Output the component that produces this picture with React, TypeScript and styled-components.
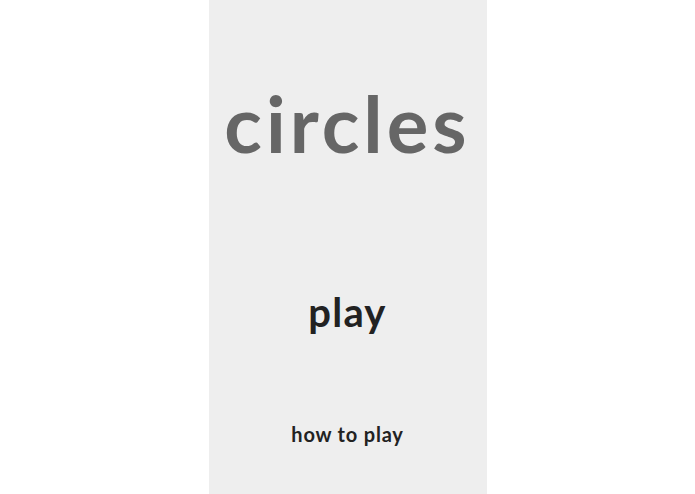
import React from "react";
import styled, { createGlobalStyle } from "styled-components";

const Global = createGlobalStyle`
  html, body { margin: 0; padding: 0; background: #ffffff; }
  body { font-family: Lato, "Noto Sans", sans-serif; }
`;

const Page = styled.div`
  display: flex;
  justify-content: center;
  height: 494px;
`;

const Panel = styled.main`
  width: 278px;
  height: 100%;
  background: #eeeeee;
  display: flex;
  flex-direction: column;
  align-items: center;
  padding-top: 84px;
  box-sizing: border-box;
`;

const Title = styled.h1`
  margin: 0;
  font-size: 78px;
  line-height: 78px;
  font-weight: 700;
  color: #666666;
  letter-spacing: 4px;
`;

const MenuItem = styled.button<{ $size: number; $mt: number; $ls: number }>`
  margin: ${(p) => p.$mt}px 0 0;
  padding: 0;
  border: 0;
  background: none;
  cursor: pointer;
  font-family: Lato, "Noto Sans", sans-serif;
  font-size: ${(p) => p.$size}px;
  line-height: ${(p) => p.$size}px;
  font-weight: 700;
  color: #222222;
  letter-spacing: ${(p) => p.$ls}px;
`;

export default function App() {
  return (
    <>
      <Global />
      <Page>
        <Panel>
          <Title>circles</Title>
          <MenuItem $size={40} $mt={130} $ls={1.2}>play</MenuItem>
          <MenuItem $size={20} $mt={92} $ls={0.8}>how to play</MenuItem>
        </Panel>
      </Page>
    </>
  );
}
